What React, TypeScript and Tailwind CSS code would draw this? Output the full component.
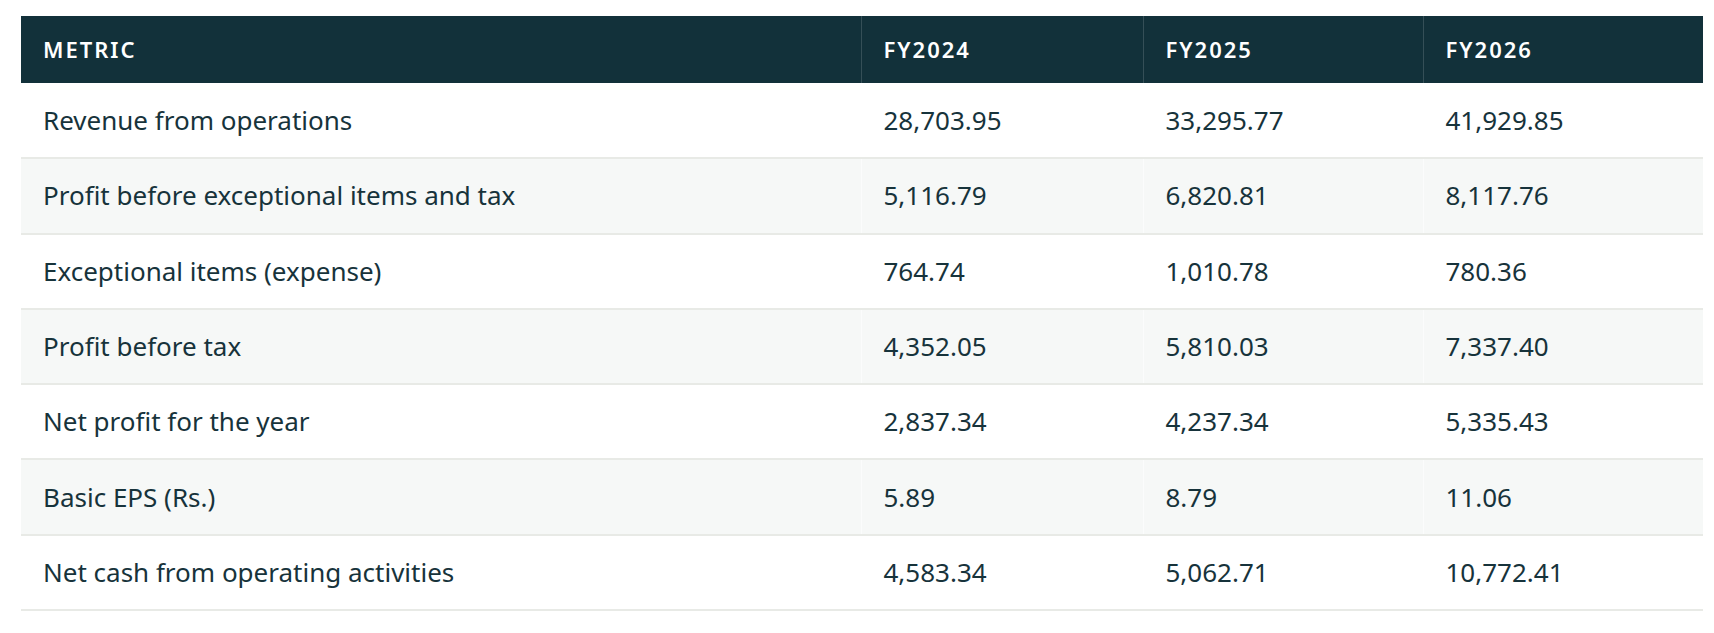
const rows: [string, string, string, string][] = [
  ["Revenue from operations", "28,703.95", "33,295.77", "41,929.85"],
  ["Profit before exceptional items and tax", "5,116.79", "6,820.81", "8,117.76"],
  ["Exceptional items (expense)", "764.74", "1,010.78", "780.36"],
  ["Profit before tax", "4,352.05", "5,810.03", "7,337.40"],
  ["Net profit for the year", "2,837.34", "4,237.34", "5,335.43"],
  ["Basic EPS (Rs.)", "5.89", "8.79", "11.06"],
  ["Net cash from operating activities", "4,583.34", "5,062.71", "10,772.41"],
];

const headers = ["Metric", "FY2024", "FY2025", "FY2026"];

export default function App() {
  return (
    <div className="w-[1714px] h-[633px] bg-white pt-[16px] pl-[21px] font-['Noto_Sans',sans-serif]">
      <table className="w-[1682px] border-collapse table-fixed">
        <colgroup>
          <col className="w-[840px]" />
          <col className="w-[282px]" />
          <col className="w-[280px]" />
          <col className="w-[280px]" />
        </colgroup>
        <thead>
          <tr className="h-[67px] bg-[#12313a]">
            {headers.map((h, i) => (
              <th
                key={h}
                className={`px-[22px] text-left text-[22px] font-semibold uppercase tracking-[0.09em] text-white ${
                  i > 0 ? "border-l border-white/15" : ""
                }`}
              >
                {h}
              </th>
            ))}
          </tr>
        </thead>
        <tbody>
          {rows.map((r, ri) => (
            <tr
              key={r[0]}
              className={`h-[75.3px] border-b-2 border-[#e8eae6] ${ri % 2 === 1 ? "bg-[#f6f8f7]" : "bg-white"}`}
            >
              {r.map((c, ci) => (
                <td
                  key={ci}
                  className={`px-[22px] text-[26px] text-[#17333b] ${ci > 0 ? "border-l border-l-white/60" : ""}`}
                >
                  {c}
                </td>
              ))}
            </tr>
          ))}
        </tbody>
      </table>
    </div>
  );
}
